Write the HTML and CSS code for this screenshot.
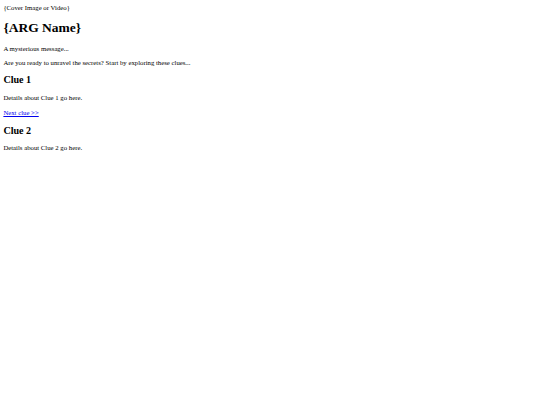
FILE: index.html
```html
<!DOCTYPE html>
<html lang="en">
<head>
<meta charset="utf-8">
<title>{ARG Name}</title>
<link rel="stylesheet" href="styles.css">
</head>
<body>
  <header class="hero">
    <div class="cover">{Cover Image or Video}</div>
    <h1 class="title">{ARG Name}</h1>
    <p class="text">A mysterious message...</p>
  </header>
  <main>
    <p class="text">Are you ready to unravel the secrets? Start by exploring these clues...</p>
    <section class="clue">
      <h2 class="clue-title">Clue 1</h2>
      <p class="text">Details about Clue 1 go here.</p>
      <p class="next-line"><a class="next" href="#clue-2">Next clue &gt;&gt;</a></p>
    </section>
    <section class="clue" id="clue-2">
      <h2 class="clue-title">Clue 2</h2>
      <p class="text">Details about Clue 2 go here.</p>
    </section>
  </main>
</body>
</html>
```
FILE: styles.css
```css
html {
  background: #fff;
}

body {
  margin: 4.2px 3.375px 3.375px;
  font-family: "Liberation Serif", "Times New Roman", serif;
  font-size: 6.75px;
  color: #000;
}

.cover {
  line-height: normal;
}

.title {
  font-size: 13.5px;
  font-weight: bold;
  margin: 9.05px 0;
}

.text {
  margin: 6.75px 0;
}

.clue-title {
  font-size: 10.125px;
  font-weight: bold;
  margin: 8.4px 0;
}

.next-line {
  margin: 7.75px 0 9.4px;
}

.next {
  color: #0000ee;
  text-decoration: underline;
}
```
